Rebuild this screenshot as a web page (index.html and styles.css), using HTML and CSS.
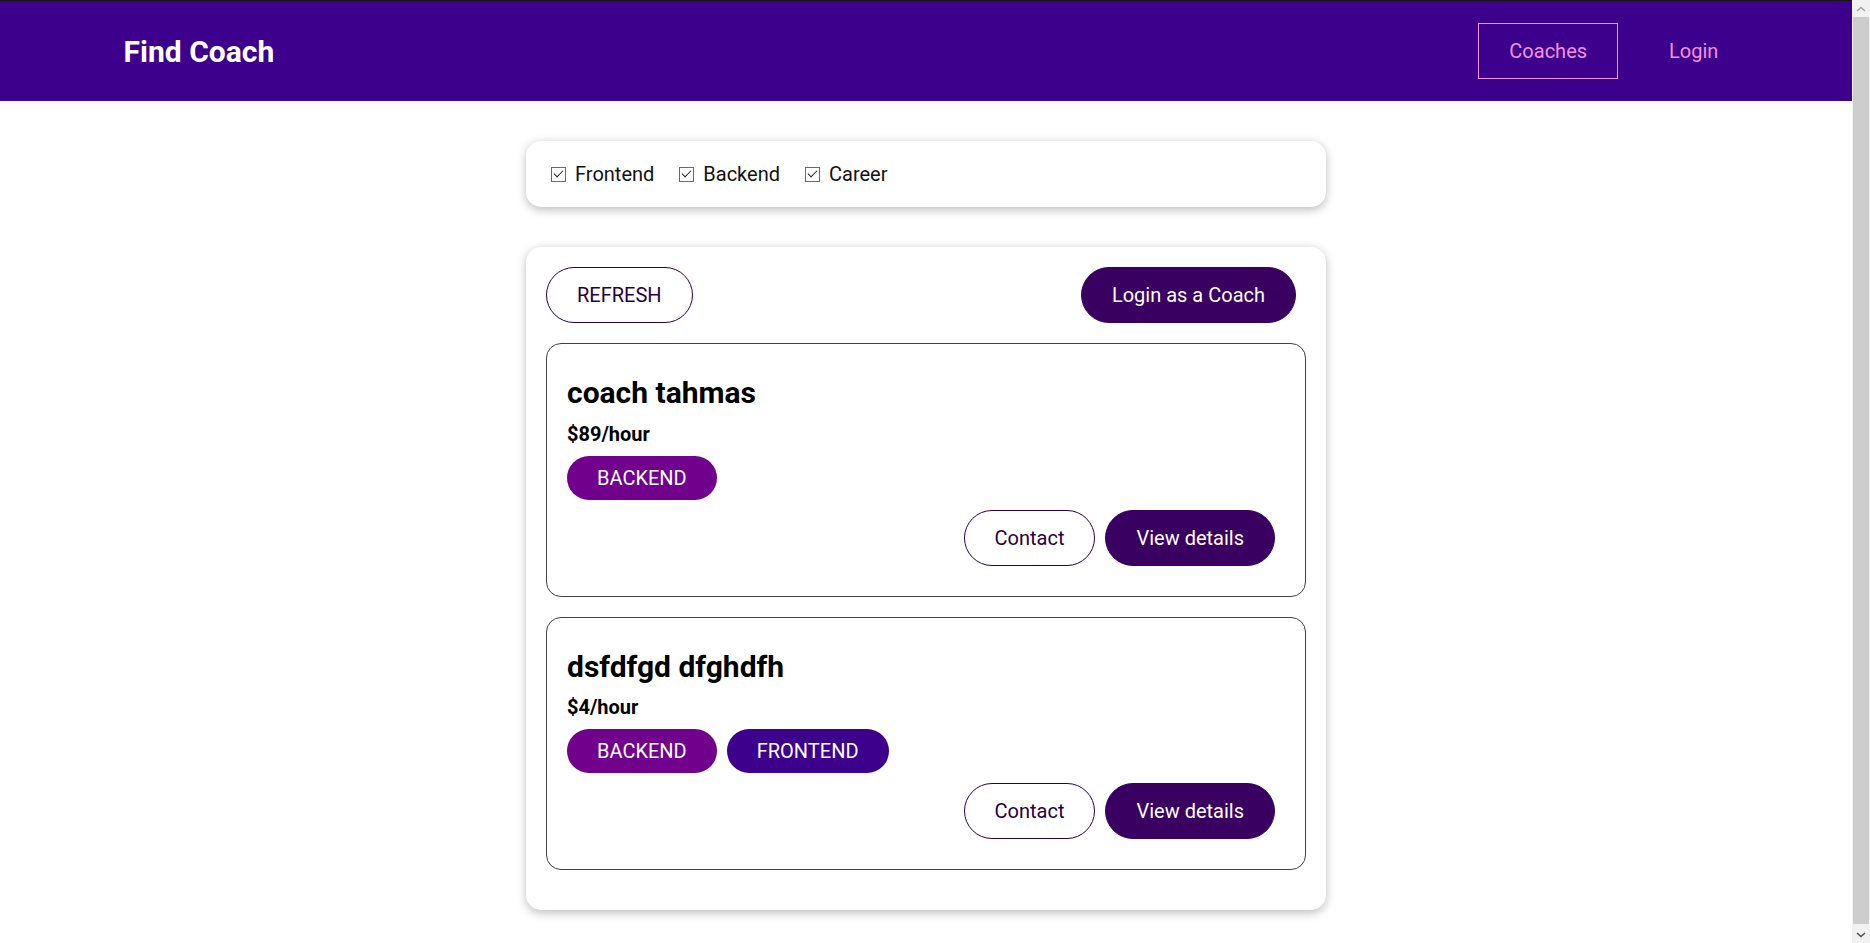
FILE: index.html
```
<!DOCTYPE html>
<html lang="en">
<head>
<meta charset="utf-8">
<title>Find Coach</title>
<link rel="stylesheet" href="styles.css">
</head>
<body>
<header class="site-header">
  <nav class="nav">
    <h1 class="brand"><a href="#">Find Coach</a></h1>
    <ul class="nav-list">
      <li class="nav-item"><a class="nav-link active" href="#">Coaches</a></li>
      <li class="nav-item"><a class="nav-link" href="#">Login</a></li>
    </ul>
  </nav>
</header>
<main>
  <section class="card filter-card">
    <span class="filter-option">
      <input class="check" type="checkbox" id="frontend" checked>
      <label for="frontend">Frontend</label>
    </span>
    <span class="filter-option">
      <input class="check" type="checkbox" id="backend" checked>
      <label for="backend">Backend</label>
    </span>
    <span class="filter-option">
      <input class="check" type="checkbox" id="career" checked>
      <label for="career">Career</label>
    </span>
  </section>
  <section class="card">
    <div class="controls">
      <button class="btn outline">REFRESH</button>
      <a class="btn" href="#">Login as a Coach</a>
    </div>
    <ul class="coach-list">
      <li class="coach">
        <h3 class="coach-name">coach tahmas</h3>
        <h4 class="coach-rate">$89/hour</h4>
        <div class="badges"><span class="badge backend">BACKEND</span></div>
        <div class="actions">
          <a class="btn outline" href="#">Contact</a>
          <a class="btn" href="#">View details</a>
        </div>
      </li>
      <li class="coach">
        <h3 class="coach-name">dsfdfgd dfghdfh</h3>
        <h4 class="coach-rate">$4/hour</h4>
        <div class="badges"><span class="badge backend">BACKEND</span><span class="badge frontend">FRONTEND</span></div>
        <div class="actions">
          <a class="btn outline" href="#">Contact</a>
          <a class="btn" href="#">View details</a>
        </div>
      </li>
    </ul>
  </section>
</main>
<div class="scrollbar" aria-hidden="true">
  <div class="sb-btn">
    <svg width="10" height="6" viewBox="0 0 10 6"><path d="M1 5 L5 1.5 L9 5" fill="none" stroke="#a3a3a3" stroke-width="1.6"/></svg>
  </div>
  <div class="sb-thumb"></div>
  <div class="sb-btn">
    <svg width="10" height="6" viewBox="0 0 10 6"><path d="M1 1 L5 4.5 L9 1" fill="none" stroke="#505050" stroke-width="1.6"/></svg>
  </div>
</div>
</body>
</html>
```
FILE: styles.css
```
* { box-sizing: border-box; }

html {
  font-family: Roboto, "Liberation Sans", sans-serif;
  font-size: 20px;
}

body {
  margin: 0;
  padding-right: 18px;
  border-top: 1px solid #151515;
}

.scrollbar {
  position: fixed;
  top: 0;
  right: 0;
  bottom: 0;
  width: 18px;
  background: #f1f1f1;
  display: flex;
  flex-direction: column;
}

.sb-btn {
  height: 17px;
  display: flex;
  align-items: center;
  justify-content: center;
}

.sb-thumb {
  flex: 1;
  background: #cdcdcd;
  margin: 0 1px 2px;
}

.site-header {
  width: 100%;
  height: 100px;
  background-color: #3d008d;
  display: flex;
  justify-content: center;
  align-items: center;
}

.nav {
  width: 90%;
  margin: auto;
  display: flex;
  justify-content: space-between;
  align-items: center;
}

.brand {
  margin: 0;
  font-size: 1.5rem;
}

.brand a {
  color: #fff;
  text-decoration: none;
  display: inline-block;
  padding: 0.75rem 1.5rem;
  border: 1px solid transparent;
}

.nav-list {
  list-style: none;
  margin: 0;
  padding: 0;
  display: flex;
  align-items: center;
}

.nav-item { margin: 0 0.5rem; }

.nav-link {
  text-decoration: none;
  color: #f391e3;
  display: inline-block;
  padding: 0.75rem 1.5rem;
  border: 1px solid transparent;
}

.nav-link.active { border-color: #f391e3; }

.card {
  border-radius: 15px;
  box-shadow: 0 2.5px 10px rgba(0, 0, 0, 0.26);
  padding: 1rem;
  margin: 2rem auto;
  max-width: 40rem;
  background: #fff;
}

.filter-card {
  display: flex;
  align-items: center;
}

.filter-option {
  display: inline-flex;
  align-items: center;
  margin-right: 1rem;
}

.filter-option label {
  margin-left: 0.25rem;
  line-height: 26px;
  color: #111;
}

.check {
  appearance: none;
  -webkit-appearance: none;
  width: 15px;
  height: 15px;
  margin: 0 4px 0 5px;
  border: 1.5px solid #6a6a6a;
  background: #fff;
  position: relative;
}

.check:checked::after {
  content: "";
  position: absolute;
  left: 3.5px;
  top: 0.5px;
  width: 4px;
  height: 8px;
  border-right: 1.5px solid #222;
  border-bottom: 1.5px solid #222;
  transform: rotate(45deg);
}

.controls {
  display: flex;
  justify-content: space-between;
}

.btn {
  text-decoration: none;
  padding: 0.75rem 1.5rem;
  font: inherit;
  background-color: #3a0061;
  border: 1px solid #3a0061;
  color: #fff;
  cursor: pointer;
  border-radius: 30px;
  margin-right: 0.5rem;
  display: inline-block;
  line-height: normal;
}

.btn.outline {
  background-color: transparent;
  border-color: #270041;
  color: #270041;
}

.coach-list {
  list-style: none;
  margin: 0;
  padding: 0;
}

.coach {
  margin: 1rem 0;
  border: 1px solid #424242;
  border-radius: 15px;
  padding: 1rem;
}

.coach-name {
  font-size: 1.5rem;
  line-height: 1.25;
  margin: 0.5rem 0;
}

.coach-rate {
  font-size: 1rem;
  margin: 0.5rem 0;
}

.badges { margin: 0.5rem 0; }

.badge {
  border-radius: 30px;
  padding: 0.5rem 1.5rem;
  display: inline-block;
  margin-right: 0.5rem;
  color: #fff;
}

.badge.backend { background-color: #71008d; }
.badge.frontend { background-color: #3d008d; }

.actions {
  margin: 0.5rem 0;
  display: flex;
  justify-content: flex-end;
}
```
